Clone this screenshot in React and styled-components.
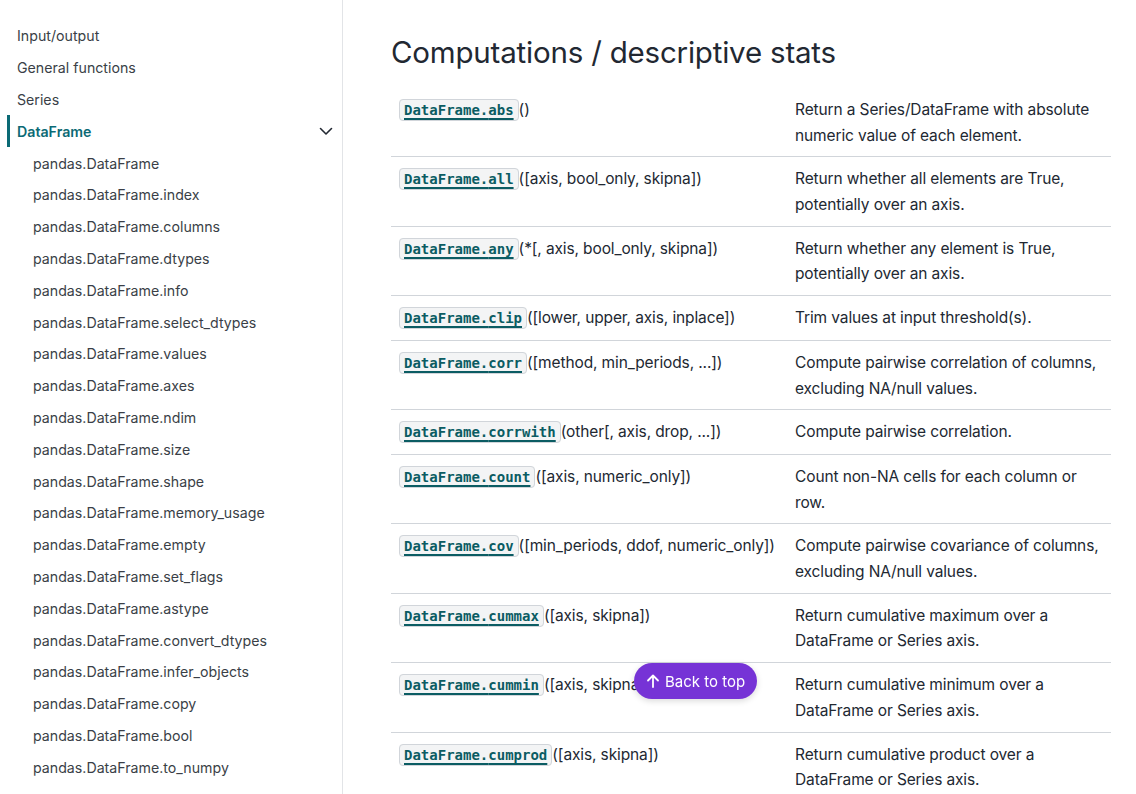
import styled, { createGlobalStyle } from "styled-components";

const GlobalStyle = createGlobalStyle`
  html, body {
    margin: 0;
    padding: 0;
    background: #ffffff;
    font-family: Inter, "Liberation Sans", sans-serif;
    color: #222832;
    overflow: hidden;
  }
`;

const Layout = styled.div`
  display: flex;
  height: 100vh;
  overflow: hidden;
`;

const Sidebar = styled.nav`
  width: 342px;
  flex-shrink: 0;
  border-right: 1px solid #e2e4e7;
  padding-top: 20px;
  overflow: hidden;
`;

const NavList = styled.ul`
  list-style: none;
  margin: 0;
  padding: 0;
`;

const NavItem = styled.li`
  display: flex;
  align-items: center;
  justify-content: space-between;
  height: 31.8px;
  margin-left: 7px;
  padding-left: ${(p) => (p.$sub ? "23px" : "7px")};
  padding-right: 8px;
  border-left: 3px solid ${(p) => (p.$active ? "#0b6a75" : "transparent")};
  font-size: 14.2px;
  font-weight: ${(p) => (p.$active ? 600 : 400)};
  color: ${(p) => (p.$active ? "#0b6a75" : "#3a3f47")};
`;

const Chevron = styled.svg`
  width: 16px;
  height: 16px;
  color: #222832;
`;

const Main = styled.main`
  flex: 1;
  padding: 0 25px 0 48px;
`;

const Title = styled.h1`
  font-size: 29.5px;
  font-weight: 400;
  letter-spacing: -0.2px;
  margin: 36px 0 18px;
  line-height: 1.15;
  color: #222832;
`;

const Table = styled.table`
  border-collapse: collapse;
  width: 720px;
  font-size: 15.5px;
  letter-spacing: -0.12px;
  line-height: 25.7px;
`;

const Row = styled.tr`
  border-bottom: 1px solid #d1d5da;
`;

const Cell = styled.td`
  vertical-align: top;
  padding: 9px 8px 8px;
  width: ${(p) => p.$w};
  white-space: ${(p) => (p.$nowrap ? "nowrap" : "normal")};
`;

const CodeLink = styled.code`
  font-family: "DejaVu Sans Mono", "Liberation Mono", monospace;
  font-weight: 700;
  font-size: 14px;
  letter-spacing: 0;
  color: #0b5c63;
  background: #f3f4f5;
  border: 1px solid #d1d5da;
  border-radius: 4px;
  padding: 2px 4px;
  text-decoration: underline;
  text-decoration-thickness: 1.5px;
  text-underline-offset: 3px;
`;

const BackToTop = styled.button`
  position: fixed;
  left: 634px;
  top: 663px;
  height: 36px;
  padding: 0 12px 0 11px;
  border: none;
  border-radius: 18px;
  background: #7633d6;
  color: #ffffff;
  font-family: Inter, "Liberation Sans", sans-serif;
  font-size: 15px;
  display: flex;
  align-items: center;
  gap: 4px;
  box-shadow: 0 2px 6px rgba(0, 0, 0, 0.15);
`;

const topItems = ["Input/output", "General functions", "Series"];

const subItems = [
  "pandas.DataFrame",
  "pandas.DataFrame.index",
  "pandas.DataFrame.columns",
  "pandas.DataFrame.dtypes",
  "pandas.DataFrame.info",
  "pandas.DataFrame.select_dtypes",
  "pandas.DataFrame.values",
  "pandas.DataFrame.axes",
  "pandas.DataFrame.ndim",
  "pandas.DataFrame.size",
  "pandas.DataFrame.shape",
  "pandas.DataFrame.memory_usage",
  "pandas.DataFrame.empty",
  "pandas.DataFrame.set_flags",
  "pandas.DataFrame.astype",
  "pandas.DataFrame.convert_dtypes",
  "pandas.DataFrame.infer_objects",
  "pandas.DataFrame.copy",
  "pandas.DataFrame.bool",
  "pandas.DataFrame.to_numpy",
  "pandas.DataFrame.head",
  "pandas.DataFrame.at",
];

const rows = [
  ["abs", "()", "Return a Series/DataFrame with absolute numeric value of each element."],
  ["all", "([axis, bool_only, skipna])", "Return whether all elements are True, potentially over an axis."],
  ["any", "(*[, axis, bool_only, skipna])", "Return whether any element is True, potentially over an axis."],
  ["clip", "([lower, upper, axis, inplace])", "Trim values at input threshold(s)."],
  ["corr", "([method, min_periods, ...])", "Compute pairwise correlation of columns, excluding NA/null values."],
  ["corrwith", "(other[, axis, drop, ...])", "Compute pairwise correlation."],
  ["count", "([axis, numeric_only])", "Count non-NA cells for each column or row."],
  ["cov", "([min_periods, ddof, numeric_only])", "Compute pairwise covariance of columns, excluding NA/null values."],
  ["cummax", "([axis, skipna])", "Return cumulative maximum over a DataFrame or Series axis."],
  ["cummin", "([axis, skipna])", "Return cumulative minimum over a DataFrame or Series axis."],
  ["cumprod", "([axis, skipna])", "Return cumulative product over a DataFrame or Series axis."],
  ["cumsum", "([axis, skipna])", "Return cumulative sum over a DataFrame or Series axis."],
];

export default function App() {
  return (
    <>
      <GlobalStyle />
      <Layout>
        <Sidebar>
          <NavList>
            {topItems.map((t) => (
              <NavItem key={t}>{t}</NavItem>
            ))}
            <NavItem $active>
              DataFrame
              <Chevron viewBox="0 0 16 16" fill="none">
                <path d="M2.5 5.5L8 11l5.5-5.5" stroke="currentColor" strokeWidth="1.6" strokeLinecap="round" strokeLinejoin="round" />
              </Chevron>
            </NavItem>
            {subItems.map((t) => (
              <NavItem key={t} $sub>
                {t}
              </NavItem>
            ))}
          </NavList>
        </Sidebar>
        <Main>
          <Title>Computations / descriptive stats</Title>
          <Table>
            <tbody>
              {rows.map(([name, sig, desc]) => (
                <Row key={name}>
                  <Cell $w="380px" $nowrap>
                    <CodeLink>DataFrame.{name}</CodeLink>
                    {sig}
                  </Cell>
                  <Cell $w="308px">{desc}</Cell>
                </Row>
              ))}
            </tbody>
          </Table>
        </Main>
      </Layout>
      <BackToTop>
        <svg width="16" height="16" viewBox="0 0 16 16" fill="none">
          <path d="M8 14V2.5M3 7.5L8 2.5l5 5" stroke="currentColor" strokeWidth="1.8" strokeLinecap="round" strokeLinejoin="round" />
        </svg>
        Back to top
      </BackToTop>
    </>
  );
}
